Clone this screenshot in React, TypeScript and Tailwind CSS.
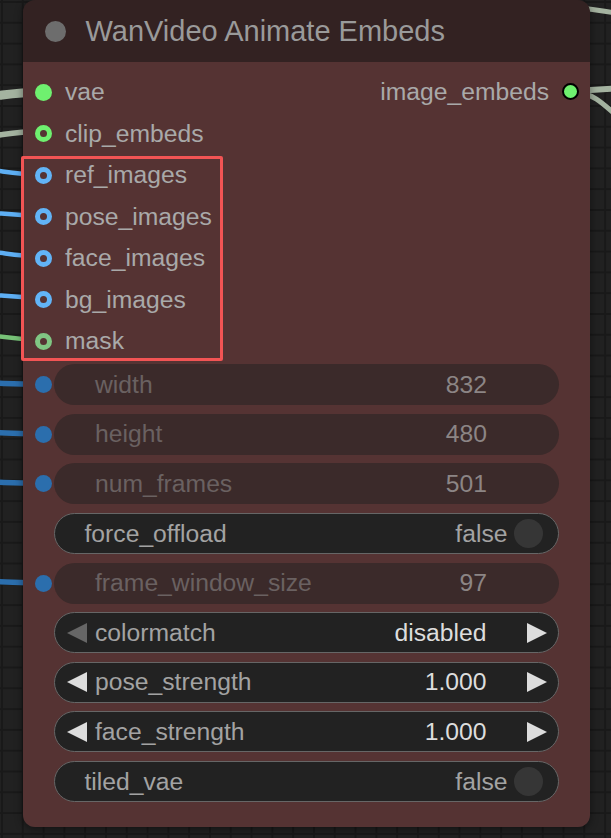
import React from "react";

type Slot = { name: string; color: string; filled?: boolean; output?: string };

const topSlots: Slot[] = [
  { name: "vae", color: "#6ff06f", filled: true, output: "image_embeds" },
  { name: "clip_embeds", color: "#6ff06f" },
];

const boxedSlots: Slot[] = [
  { name: "ref_images", color: "#62b4f7" },
  { name: "pose_images", color: "#62b4f7" },
  { name: "face_images", color: "#62b4f7" },
  { name: "bg_images", color: "#62b4f7" },
  { name: "mask", color: "#80c683" },
];

type Widget =
  | { kind: "number"; label: string; value: string }
  | { kind: "toggle"; label: string; value: string }
  | { kind: "combo"; label: string; value: string; leftOff?: boolean };

const widgets: Widget[] = [
  { kind: "number", label: "width", value: "832" },
  { kind: "number", label: "height", value: "480" },
  { kind: "number", label: "num_frames", value: "501" },
  { kind: "toggle", label: "force_offload", value: "false" },
  { kind: "number", label: "frame_window_size", value: "97" },
  { kind: "combo", label: "colormatch", value: "disabled", leftOff: true },
  { kind: "combo", label: "pose_strength", value: "1.000" },
  { kind: "combo", label: "face_strength", value: "1.000" },
  { kind: "toggle", label: "tiled_vae", value: "false" },
];

function SlotRow({ slot }: { slot: Slot }) {
  return (
    <div className="flex h-[41.5px] items-center pl-[12px] pr-[11px]">
      {slot.filled ? (
        <span className="h-[17px] w-[17px] shrink-0 rounded-full" style={{ background: slot.color }} />
      ) : (
        <span
          className="h-[17px] w-[17px] shrink-0 rounded-full border-[5.5px]"
          style={{ borderColor: slot.color }}
        />
      )}
      <span className="ml-[13px] pt-[1px] text-[24.7px] leading-none text-[#a9a9a9]">{slot.name}</span>
      {slot.output && (
        <div className="ml-auto flex items-center">
          <span className="pt-[1px] text-[24.7px] leading-none text-[#a9a9a9]">{slot.output}</span>
          <span className="ml-[13px] h-[17px] w-[17px] rounded-full border-2 border-black bg-[#6ff06f]" />
        </div>
      )}
    </div>
  );
}

function Arrow({ dir, color }: { dir: "left" | "right"; color: string }) {
  return (
    <svg width="20" height="20" viewBox="0 0 20 20" className="shrink-0">
      {dir === "left" ? (
        <polygon points="20,0 0,10 20,20" fill={color} />
      ) : (
        <polygon points="0,0 20,10 0,20" fill={color} />
      )}
    </svg>
  );
}

function WidgetRow({ w }: { w: Widget }) {
  return (
    <div className="flex h-[41px] items-center pl-[12px] pr-[31px]">
      <div className="flex w-[19px] shrink-0 items-center">
        {w.kind === "number" && <span className="h-[17px] w-[17px] rounded-full bg-[#2b6ead]" />}
      </div>
      {w.kind === "number" && (
        <div className="flex h-full flex-1 items-center rounded-full bg-[#3b2a2a] pl-[41px] pr-[72px] pt-[1px] text-[24.7px] leading-none">
          <span className="text-[#6a6161]">{w.label}</span>
          <span className="ml-auto text-[#8c8585]">{w.value}</span>
        </div>
      )}
      {w.kind === "toggle" && (
        <div className="flex h-full flex-1 items-center rounded-full border-[1.5px] border-[#666666] bg-[#222222] pl-[29.5px] pr-[15px] text-[24.7px] leading-none">
          <span className="pt-[1px] text-[#a3a3a3]">{w.label}</span>
          <span className="ml-auto pt-[1px] text-[#a3a3a3]">{w.value}</span>
          <span className="ml-[6.5px] h-[29px] w-[29px] rounded-full bg-[#363636]" />
        </div>
      )}
      {w.kind === "combo" && (
        <div className="flex h-full flex-1 items-center rounded-full border-[1.5px] border-[#666666] bg-[#222222] pl-[11.5px] pr-[11.5px] text-[24.7px] leading-none">
          <Arrow dir="left" color={w.leftOff ? "#666666" : "#dddddd"} />
          <span className="ml-[8.5px] pt-[1px] text-[#a3a3a3]">{w.label}</span>
          <span className="ml-auto pt-[1px] text-[#dddddd]">{w.value}</span>
          <span className="ml-[40px]">
            <Arrow dir="right" color="#dddddd" />
          </span>
        </div>
      )}
    </div>
  );
}

export default function App() {
  return (
    <div className="relative h-[838px] w-[611px] overflow-hidden bg-[#212121] [background-image:linear-gradient(#191919_2px,transparent_2px),linear-gradient(90deg,#191919_2px,transparent_2px)] [background-size:20.8px_20.8px] [background-position:1px_1px] [font-family:'Liberation_Sans',Arial,sans-serif]">
      {/* links behind the node */}
      <svg className="absolute inset-0" width="611" height="838" fill="none" strokeLinecap="round">
        <path d="M-20 97 C 0 96, 10 93, 40 92" stroke="#a4b3a0" strokeWidth="9" />
        <path d="M-20 137 C 0 136, 10 132, 40 131" stroke="#a4b3a0" strokeWidth="5.5" />
        <path d="M-20 169 C 0 170, 10 174, 40 175" stroke="#5eaff4" strokeWidth="4.5" />
        <path d="M-20 212 C 0 213, 10 215, 40 216" stroke="#5eaff4" strokeWidth="4.5" />
        <path d="M-20 251 C 0 252, 10 255, 40 257" stroke="#5eaff4" strokeWidth="4.5" />
        <path d="M-20 294 C 0 295, 10 297, 40 298" stroke="#5eaff4" strokeWidth="4.5" />
        <path d="M-20 334 C 0 336, 10 339, 40 340" stroke="#77c277" strokeWidth="4.5" />
        <path d="M-20 383 C 0 383, 10 384, 40 384" stroke="#2b6ead" strokeWidth="5.5" />
        <path d="M-20 432 C 0 433, 10 433, 40 434" stroke="#2b6ead" strokeWidth="5.5" />
        <path d="M-20 482 C 0 482, 10 483, 40 483" stroke="#2b6ead" strokeWidth="5.5" />
        <path d="M-20 581 C 0 582, 10 582, 40 583" stroke="#2b6ead" strokeWidth="5.5" />
        <path d="M560 6 C 590 8, 600 11, 630 15" stroke="#a4b3a0" strokeWidth="5" />
        <path d="M571 92 C 590 90, 600 89, 630 88" stroke="#a4b3a0" strokeWidth="6" />
        <path d="M571 92 C 592 92, 600 100, 630 128" stroke="#a4b3a0" strokeWidth="5" />
      </svg>

      <div className="relative z-10 ml-[23px] w-[567px] rounded-[12px] shadow-[0_2px_8px_rgba(0,0,0,0.45)]">
        <div className="flex h-[62px] items-center rounded-t-[12px] bg-[#332222] pl-[21.5px]">
          <span className="h-[21px] w-[21px] rounded-full bg-[#6d6d6d]" />
          <span className="ml-[20px] text-[29px] leading-none text-[#9a9a9a]">
            WanVideo Animate Embeds
          </span>
        </div>
        <div className="rounded-b-[12px] bg-[#553333] pt-[9.25px] pb-[24.7px]">
          {topSlots.map((s) => (
            <SlotRow key={s.name} slot={s} />
          ))}
          <div className="relative">
            {boxedSlots.map((s) => (
              <SlotRow key={s.name} slot={s} />
            ))}
            <div className="pointer-events-none absolute left-[-2px] top-[2px] h-[205px] w-[202px] rounded-[2px] border-[3px] border-[#f25454]" />
          </div>
          <div className="mt-[2.25px] flex flex-col gap-[8.625px]">
            {widgets.map((w) => (
              <WidgetRow key={w.label} w={w} />
            ))}
          </div>
        </div>
      </div>
    </div>
  );
}
